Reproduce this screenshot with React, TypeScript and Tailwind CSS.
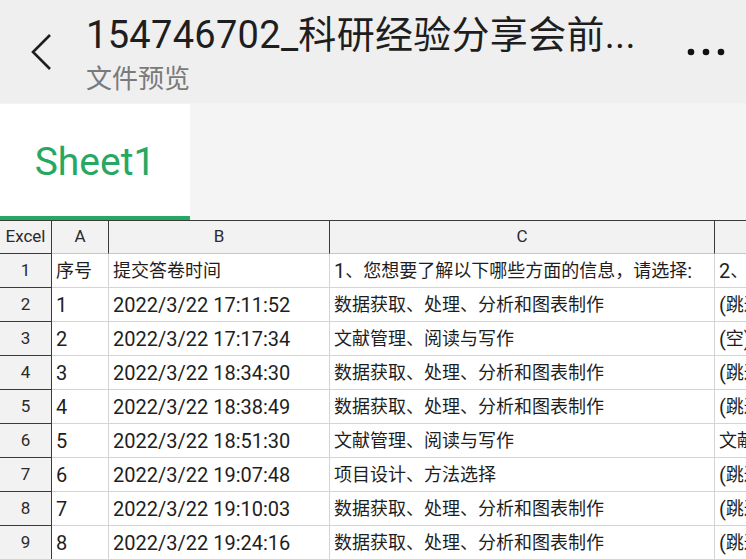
import React from "react";

const FONT = { fontFamily: 'Roboto, "Noto Sans CJK SC", sans-serif' };

const rows: string[][] = [
  ["序号", "提交答卷时间", "1、您想要了解以下哪些方面的信息，请选择:", "2、您对哪些内容最感兴趣"],
  ["1", "2022/3/22 17:11:52", "数据获取、处理、分析和图表制作", "(跳过)"],
  ["2", "2022/3/22 17:17:34", "文献管理、阅读与写作", "(空)"],
  ["3", "2022/3/22 18:34:30", "数据获取、处理、分析和图表制作", "(跳过)"],
  ["4", "2022/3/22 18:38:49", "数据获取、处理、分析和图表制作", "(跳过)"],
  ["5", "2022/3/22 18:51:30", "文献管理、阅读与写作", "文献管理"],
  ["6", "2022/3/22 19:07:48", "项目设计、方法选择", "(跳过)"],
  ["7", "2022/3/22 19:10:03", "数据获取、处理、分析和图表制作", "(跳过)"],
  ["8", "2022/3/22 19:24:16", "数据获取、处理、分析和图表制作", "(跳过)"],
];

const cols = ["A", "B", "C", ""];

// CJK glyphs render a bit smaller than the latin digits in the source app
function Mixed({ text }: { text: string }) {
  const parts = text.split(/([\u3000-\u9fff\uff00-\uffef]+)/);
  return (
    <>
      {parts.map((p, i) =>
        /[\u3000-\u9fff\uff00-\uffef]/.test(p) ? (
          <span key={i} className="text-[18px]">
            {p}
          </span>
        ) : (
          <span key={i}>{p}</span>
        )
      )}
    </>
  );
}

function Header() {
  return (
    <div className="flex h-[103px] bg-[#efefef]">
      <div className="w-[86px] flex items-start pt-[33px] pl-[30px]">
        <svg width="24" height="38" viewBox="0 0 24 38">
          <polyline points="20,2 3,19 20,36" fill="none" stroke="#1f1f1f" strokeWidth="2.6" />
        </svg>
      </div>
      <div className="flex-1 pt-[12px]">
        <div className="text-[38px] leading-[46px] text-[#1e1e1e] whitespace-nowrap tracking-[0.3px]">
          154746702_科研经验分享会前...
        </div>
        <div className="text-[26px] leading-[32px] text-[#7a7a7a] mt-[5px]">文件预览</div>
      </div>
      <div className="w-[70px] pt-[46px] pl-[11px]">
        <svg width="40" height="12" viewBox="0 0 40 12">
          <circle cx="4" cy="6" r="3.3" fill="#111" />
          <circle cx="19" cy="6" r="3.3" fill="#111" />
          <circle cx="34" cy="6" r="3.3" fill="#111" />
        </svg>
      </div>
    </div>
  );
}

function Tabs() {
  return (
    <div className="h-[118px] bg-[#f4f4f4] pt-[1px] border-b border-[#3a3a3a]">
      <div className="w-[190px] h-[112px] bg-white flex items-center justify-center pt-[4px] text-[39px] text-[#27a862]">
        Sheet1
      </div>
      <div className="w-[190px] h-[4px] bg-[#27a862]" />
    </div>
  );
}

function Sheet() {
  return (
    <div className="grid grid-cols-[52px_57px_221px_385px_120px] w-[835px]">
      <div className="h-[33px] bg-[#f2f2f2] border-r border-b border-[#3a3a3a] flex items-center justify-center text-[17px] text-[#2a2a2a]">
        Excel
      </div>
      {cols.map((c, i) => (
        <div
          key={i}
          className="h-[33px] bg-[#f2f2f2] border-r border-b border-r-[#3a3a3a] border-b-[#c8c8c8] flex items-center justify-center text-[17px] text-[#2a2a2a]"
        >
          {c}
        </div>
      ))}
      {rows.map((r, ri) => (
        <React.Fragment key={ri}>
          <div className="h-[34px] bg-[#f2f2f2] border-r border-b border-[#3a3a3a] flex items-center justify-center text-[17px] text-[#2a2a2a]">
            {ri + 1}
          </div>
          {r.map((v, ci) => (
            <div
              key={ci}
              className="h-[34px] bg-white border-r border-b border-[#d4d4d4] flex items-center pl-[4px] text-[20px] text-[#1e1e1e] whitespace-nowrap overflow-hidden"
            >
              <Mixed text={v} />
            </div>
          ))}
        </React.Fragment>
      ))}
    </div>
  );
}

export default function App() {
  return (
    <div className="w-[746px] h-[559px] overflow-hidden bg-white" style={FONT}>
      <Header />
      <Tabs />
      <Sheet />
    </div>
  );
}
